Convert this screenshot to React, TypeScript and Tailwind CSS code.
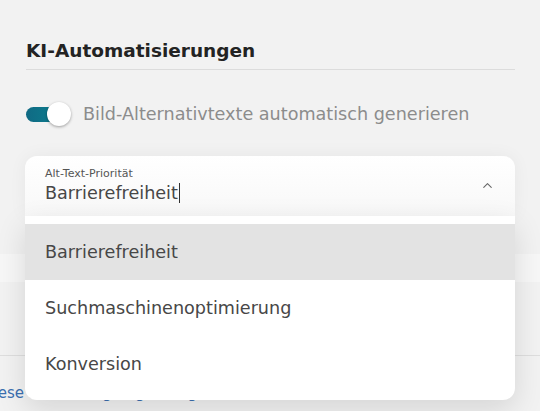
import { ChevronUp } from 'lucide-react';

const options = ['Barrierefreiheit', 'Suchmaschinenoptimierung', 'Konversion'];

function Toggle() {
  return (
    <div className="relative w-[46px] h-[24px] flex items-center shrink-0">
      <div className="w-[40px] h-[15px] rounded-full bg-gradient-to-r from-[#106a84] to-[#0a8290]" />
      <div className="absolute left-[21px] top-0 w-[24px] h-[24px] rounded-full bg-white shadow-[0_1px_3px_rgba(0,0,0,0.35)]" />
    </div>
  );
}

export default function App() {
  return (
    <div className="relative h-[411px] w-[540px] overflow-hidden bg-[#f2f2f2] font-['DejaVu_Sans',sans-serif]">
      <div className="pl-[26px] pr-[25px] pt-[37px]">
        <h2 className="text-[18.5px] font-bold leading-[28px] text-[#232323]">KI-Automatisierungen</h2>
        <div className="mt-[4px] h-px bg-[#dcdcdc]" />
        <div className="mt-[32px] flex items-center gap-[11px]">
          <Toggle />
          <span className="text-[17.6px] leading-[24px] text-[#8c8c8c]">Bild-Alternativtexte automatisch generieren</span>
        </div>
      </div>

      <div className="relative z-10 mx-[25px] mt-[30px]">
        <div className="flex h-[60px] items-center rounded-t-[12px] bg-gradient-to-b from-white to-[#f8f8f8] pl-[20px] pr-[20px] shadow-[0_0_18px_rgba(0,0,0,0.05)]">
          <div className="flex-1">
            <div className="text-[11px] leading-[14px] text-[#555]">Alt-Text-Priorität</div>
            <div className="flex items-center text-[17.6px] leading-[24px] text-[#474747]">
              Barrierefreiheit
              <span className="ml-px h-[20px] w-px bg-[#333]" />
            </div>
          </div>
          <ChevronUp size={15} strokeWidth={1.7} className="text-[#666] mb-[2px]" />
        </div>
        <div className="absolute left-0 right-0 top-full rounded-b-[12px] bg-white pt-[8px] pb-[8px] shadow-[0_10px_30px_rgba(0,0,0,0.12)]">
          {options.map((o, i) => (
            <div
              key={o}
              className={`flex h-[56px] items-center px-[20px] text-[17.6px] text-[#474747] ${i === 0 ? 'bg-[#e3e3e3]' : ''}`}
            >
              {o}
            </div>
          ))}
        </div>
      </div>

      {/* page content behind the open menu */}
      <div className="mt-[38px] h-[28px] bg-[#f7f7f7]" />
      <div className="mt-[73px] h-px bg-[#dedede]" />
      <div className="mt-[26px] -ml-[18px] whitespace-nowrap text-[15px] text-[#3b6fb0]">
        Diese Einstellungen gelten global
      </div>
    </div>
  );
}
